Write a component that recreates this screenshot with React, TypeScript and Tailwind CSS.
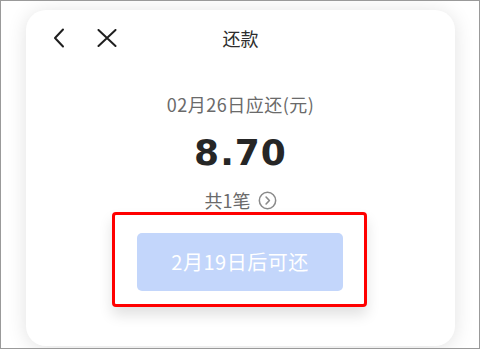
import React from "react";

export default function App() {
  return (
    <div
      className="relative w-[480px] h-[349px] overflow-hidden border border-[#9a9a9a] bg-white"
      style={{ fontFamily: '"Noto Sans CJK SC", "Noto Sans", sans-serif' }}
    >
      <div className="ml-[25px] mt-[9px] w-[429px] h-[336px] rounded-[20px] bg-white shadow-[0_2px_20px_rgba(0,0,0,0.12)] flex flex-col items-center">
        {/* header */}
        <div className="relative w-full h-[56px] flex items-center">
          <div className="flex items-center pl-[27px] gap-[32px]">
            <svg width="12" height="20" viewBox="0 0 12 20" fill="none">
              <path d="M10 1.5 L2 10 L10 18.5" stroke="#1f1f1f" strokeWidth="2" strokeLinecap="round" strokeLinejoin="round" />
            </svg>
            <svg width="20" height="18" viewBox="0 0 20 18" fill="none">
              <path d="M1.5 1 L18.5 17 M18.5 1 L1.5 17" stroke="#1f1f1f" strokeWidth="2" strokeLinecap="round" />
            </svg>
          </div>
          <div className="absolute left-0 right-0 top-0 h-[56px] flex items-center justify-center text-[18px] leading-[24px] text-[#2d2d2d] pointer-events-none">
            还款
          </div>
        </div>

        <div className="mt-[26px] text-[18px] leading-[24px] tracking-[0.5px] text-[#6a6a6a]">
          02月26日应还(元)
        </div>

        <div
          className="mt-[15px] text-[36px] leading-[44px] font-bold tracking-[1px] text-[#262626]"
          style={{ fontFamily: '"DejaVu Sans", sans-serif' }}
        >
          8.70
        </div>

        <div className="mt-[13px] flex items-center gap-[7px] text-[18px] leading-[24px] text-[#6a6a6a]">
          <span>共1笔</span>
          <svg width="19" height="19" viewBox="0 0 20 20" fill="none">
            <circle cx="10" cy="10" r="8.6" stroke="#8a8a8a" strokeWidth="1.6" />
            <path d="M8.5 6.3 L12 10 L8.5 13.7" stroke="#8a8a8a" strokeWidth="1.7" strokeLinecap="round" strokeLinejoin="round" />
          </svg>
        </div>

        <div className="-ml-[2px] w-[255px] h-[95px] border-[3px] border-[#ff0000] rounded-[4px] bg-white shadow-[0_8px_14px_rgba(0,0,0,0.12)] pt-[18px] pl-[22px]">
          <div className="w-[206px] h-[58px] rounded-[5px] bg-[#c3d6fb] flex items-center justify-center text-[20px] tracking-[0.5px] text-white">
            2月19日后可还
          </div>
        </div>
      </div>
    </div>
  );
}
